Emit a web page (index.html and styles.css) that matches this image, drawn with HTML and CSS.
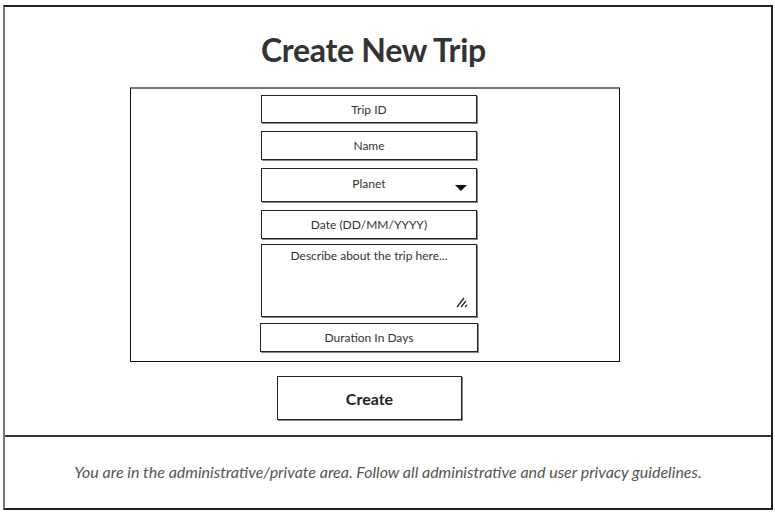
FILE: index.html
```html
<!DOCTYPE html>
<html>
<head>
<meta charset="utf-8">
<link rel="stylesheet" href="styles.css">
</head>
<body>
<div class="frame">
  <main class="main">
    <h1 class="title">Create New Trip</h1>
    <div class="form-box">
      <div class="field f-id">Trip ID</div>
      <div class="field f-name">Name</div>
      <div class="field f-planet">
        <span class="planet-label">Planet</span>
        <svg class="caret" width="12" height="6" viewBox="0 0 12 6"><path d="M0 0 H12 L6 6 Z" fill="#111"/></svg>
      </div>
      <div class="field f-date">Date (DD/MM/YYYY)</div>
      <div class="field f-desc">
        <span>Describe about the trip here...</span>
        <svg class="grip" width="12" height="12" viewBox="0 0 12 12"><path d="M1 11 L8 2 M5 11 L10 5 M9 11 L11 9" stroke="#222" stroke-width="1.3" fill="none"/></svg>
      </div>
      <div class="field f-dur">Duration In Days</div>
    </div>
    <div class="btn-row"><button class="btn">Create</button></div>
  </main>
  <footer class="footer">
    <p class="note">You are in the administrative/private area. Follow all administrative and user privacy guidelines.</p>
  </footer>
</div>
</body>
</html>
```
FILE: styles.css
```css
* { box-sizing: border-box; }
html, body { margin: 0; padding: 0; background: #fff; }
body { font-family: "Lato", "Open Sans", sans-serif; color: #333; }

.frame {
  margin: 5px 0 0 3px;
  width: 770px;
  height: 505px;
  border-top: 2px solid #222;
  border-left: 2px solid #777;
  border-right: 2px solid #222;
  border-bottom: 2px solid #222;
  display: flex;
  flex-direction: column;
}

.main {
  height: 430px;
  border-bottom: 2px solid #333;
  display: flex;
  flex-direction: column;
}

.title {
  margin: 25px 0 0 0;
  padding-right: 29px;
  text-align: center;
  font-size: 32px;
  line-height: 36px;
  font-weight: 700;
  color: #333;
  letter-spacing: -0.3px;
}

.form-box {
  margin: 19px 0 0 125px;
  width: 490px;
  height: 275px;
  border: 1px solid #111;
  border-top: 2px solid #777;
  padding: 6px 0 0 130px;
  display: flex;
  flex-direction: column;
}

.field {
  width: 216px;
  border: 1px solid #222;
  box-shadow: 1px 1px 0 #888;
  font-size: 12px;
  color: #333;
  text-align: center;
  display: flex;
  align-items: center;
  justify-content: center;
}
.f-id { height: 28px; }
.f-name { height: 29px; margin-top: 8px; }
.f-planet { height: 34px; margin-top: 8px; position: relative; align-items: flex-start; padding-top: 7px; }
.caret { position: absolute; right: 9px; top: 16px; }
.f-date { height: 29px; margin-top: 8px; }
.f-desc { height: 73px; margin-top: 5px; position: relative; align-items: flex-start; padding-top: 3px; }
.grip { position: absolute; right: 8px; bottom: 8px; }
.f-dur { height: 29px; margin-top: 6px; margin-left: -1px; width: 218px; }

.btn-row { padding: 14px 0 0 272px; }
.btn {
  width: 185px;
  height: 44px;
  background: #fff;
  border: 1px solid #222;
  box-shadow: 1px 1px 0 #888;
  font-family: "Lato", "Open Sans", sans-serif;
  font-size: 16px;
  font-weight: 700;
  color: #222;
  padding: 0;
}

.footer {
  flex: 1;
  display: flex;
  align-items: center;
  justify-content: center;
}
.note {
  margin: 0 0 2px 0;
  font-size: 16px;
  font-style: italic;
  color: #555;
}
```
